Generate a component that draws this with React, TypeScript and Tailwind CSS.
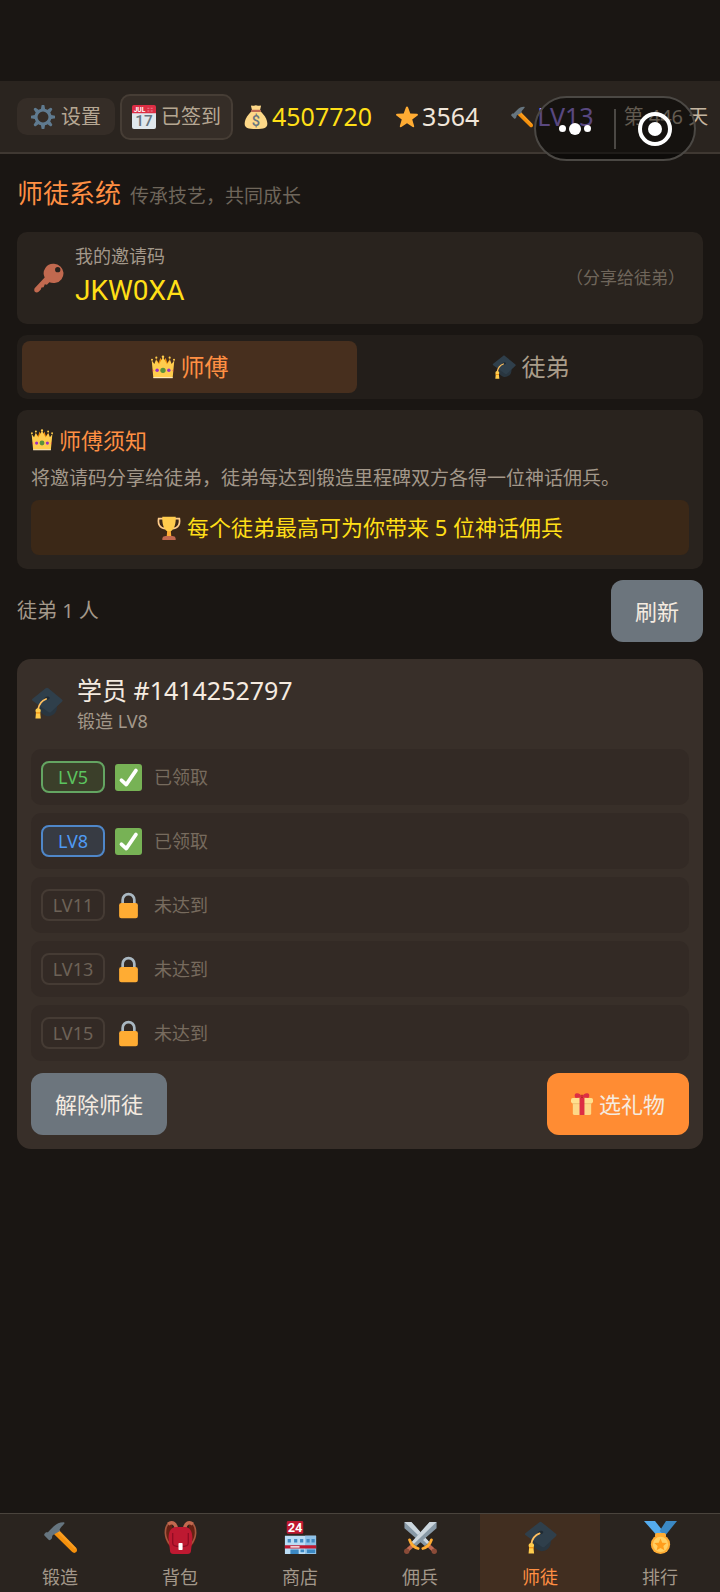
import type { ReactNode } from "react";
import clsx from "clsx";

type IconProps = { className?: string };

function Svg({ className, children }: { className?: string; children: ReactNode }) {
  return (
    <svg viewBox="0 0 36 36" className={clsx("shrink-0", className)} aria-hidden="true">
      {children}
    </svg>
  );
}

function Gear({ className }: IconProps) {
  return (
    <Svg className={className}>
      <g fill="#5f7a8f">
        {[0, 45, 90, 135, 180, 225, 270, 315].map((a) => (
          <path key={a} d="M14.5 8L15.7 1.6a2.3 2.3 0 0 1 4.6 0L21.5 8z" transform={`rotate(${a} 18 18)`} />
        ))}
      </g>
      <circle cx="18" cy="18" r="10.5" fill="none" stroke="#5f7a8f" strokeWidth="4.6" />
    </Svg>
  );
}

function Calendar({ className }: IconProps) {
  return (
    <Svg className={className}>
      <path fill="#e0e7ec" d="M36 33a3 3 0 0 1-3 3H3a3 3 0 0 1-3-3V9h36z" />
      <path fill="#dd2e44" d="M3 0h30a3 3 0 0 1 3 3v9.500H0V3a3 3 0 0 1 3-3z" />
      <path fill="#f4abba" d="M23 4h3v2h-3zM28 4h3v2h-3zM23 8h3v2h-3zM28 8h3v2h-3z" opacity=".5" />
      <text x="2.500" y="10.5" fontSize="10" fontWeight="700" fontFamily="Roboto, sans-serif" fill="#fff">JUL</text>
      <text x="18" y="32" fontSize="23" fontWeight="500" textAnchor="middle" fontFamily="Roboto, sans-serif" fill="#66757f">17</text>
    </Svg>
  );
}

function MoneyBag({ className }: IconProps) {
  return (
    <Svg className={className}>
      <path fill="#fdd888" d="M12 9C7 13 1 21 1 28c0 6 5 8 17 8s17-2 17-8c0-7-6-15-11-19z" />
      <path fill="#fdd888" d="M10.5 1.5c1.500-2 3 .5 4.500-.5s4-1 6 0 3-1.500 4.500.5L24 8H12z" />
      <rect x="10.500" y="7" width="15" height="3.500" rx="1.700" fill="#bf6952" />
      <text x="18" y="31" fontSize="22" fontWeight="500" textAnchor="middle" fontFamily="Roboto, sans-serif" fill="#67757f">$</text>
    </Svg>
  );
}

function Star({ className }: IconProps) {
  return (
    <Svg className={className}>
      <path
        fill="#ffac33"
        d="M18 .8c.8 0 1.400.5 1.700 1.300l3.700 10.200 10.900.3c1.600.1 2.200 1.900 1 2.900l-8.700 6.700 3.100 10.500c.4 1.500-1.100 2.600-2.400 1.800L18 28.300l-9.300 6.200c-1.300.8-2.800-.3-2.400-1.800l3.100-10.500L.7 15.500c-1.200-1-.6-2.800 1-2.900l10.900-.3 3.700-10.200C16.600 1.300 17.200.8 18 .8z"
      />
    </Svg>
  );
}

function Hammer({ className }: IconProps) {
  return (
    <Svg className={className}>
      <path fill="#f4900c" d="M10.800 14.200l4.800-4.800L35.200 29.500c1.100 1.300 1.100 3.200 0 4.400-1.200 1.200-3.200 1.200-4.400 0z" />
      <path fill="#ffac33" d="M13.500 11.500l2.100-2.100L35.200 29.500l-1.500 1.500z" opacity=".5" />
      <path
        fill="#66757f"
        d="M17.600 10.900c-.8-.8-.8-1.700-.1-2.500 1.200-1.700 3.400-4 4.700-5.600.8-1-.2-1.500-1.200-1.500-4.300 0-7.800 2-10.600 4.800L5.800 10.700c-.7.7-1.100 1.700-2.200 1.700-.9 0-1.500-.1-2.200.6L.6 14c-.6.7-.5 1.500.1 2.100l4.300 4.400c.6.6 1.500.6 2.100 0l1.200-1.200c.7-.7.5-1.600.6-2.400.1-1 1-1.600 1.700-2.200z"
      />
    </Svg>
  );
}

function Key({ className }: IconProps) {
  return (
    <Svg className={className}>
      <path
        fill="#c1694f"
        fillRule="evenodd"
        d="M24 1a11.500 11.500 0 0 1 2 22.800c-3 .5-5.600.1-7.500-.8l-3 3-2.500-.5-1.500 3.500-2.500.500-1 2.500-2.500 2.500c-1 1-3.500 1-4.500 0s-.9-3.500 0-4.500L12.800 17.500A11.500 11.500 0 0 1 24 1zm4.500 3.800a3.200 3.200 0 1 0 0 6.400 3.200 3.200 0 0 0 0-6.400z"
      />
    </Svg>
  );
}

function Crown({ className }: IconProps) {
  return (
    <Svg className={className}>
      <path fill="#f4900c" d="M7 5l3 12h16l3-12-4.500 7L22 4l-4 8-4-8-2.500 8z" />
      <path fill="#ffcc4d" d="M1 8l4 5.500L7.500 7l4.500 7L18 3l6 11 4.500-7 2.500 6.500L35 8l-2.500 26h-29z" />
      <path fill="#ffe8b6" d="M3.500 33h29v1.800h-29z" />
      <g fill="#ffcc4d">
        <circle cx="1.500" cy="7" r="1.500" />
        <circle cx="34.500" cy="7" r="1.500" />
        <circle cx="8" cy="4" r="1.600" />
        <circle cx="28" cy="4" r="1.600" />
        <circle cx="18" cy="2.500" r="1.900" />
      </g>
      <circle cx="18" cy="23" r="4" fill="#5c913b" />
      <circle cx="9.200" cy="23" r="2.600" fill="#9b30c0" />
      <circle cx="26.800" cy="23" r="2.600" fill="#9b30c0" />
      <path fill="#dd2e44" d="M2.200 21.500a2 2 0 0 1 .3 3.600zM33.800 21.500a2 2 0 0 0-.3 3.600z" />
    </Svg>
  );
}

function GradCap({ className }: IconProps) {
  return (
    <Svg className={className}>
      <path fill="#293640" d="M10 17l20-1-1 9c-1 6-8 9-12 7.500-3-1-6-3.500-7-5.500z" />
      <path fill="#2f3f4b" d="M16.500 1.500c1-.9 2-.9 3 0L34.800 14c1 .9 1 1.700 0 2.600L22.500 28c-1 .9-2 .9-3 0L1.800 15.500c-1-.8-.9-1.600 0-2.400z" />
      <path fill="#1f2a33" d="M16 11.500c1.500-1.200 4.500-1 5 .5s-2.500 3-4.500 2.500-1.700-2-.5-3z" />
      <path d="M17 13.500c-4 1.500-8 5.500-9 11.500" fill="none" stroke="#ffc060" strokeWidth="2" strokeLinecap="round" />
      <path fill="#ffcc4d" d="M5 27a3 3 0 0 1 6 0l-.7 1.800.7 6.700H5l.6-6.700z" />
      <path fill="#f4900c" d="M5.500 28.500h5v1.300h-5z" />
    </Svg>
  );
}

function Trophy({ className }: IconProps) {
  return (
    <Svg className={className}>
      <path d="M9 4H2.500C1 12 4 18 12 19M27 4h6.500C35 12 32 18 24 19" fill="none" stroke="#ffcc8a" strokeWidth="2.600" />
      <path fill="#ffac33" d="M15.500 20h5l1 11h-7z" />
      <path fill="#ffcc4d" d="M8 1h20c.8 9-2 19.500-7.500 22h-5C10 20.500 7.200 10 8 1z" />
      <path fill="#c1694f" d="M8 36v-2c0-3 3-4 5-4h10c2 0 5 1 5 4v2z" />
    </Svg>
  );
}

function Check({ className }: IconProps) {
  return (
    <Svg className={className}>
      <rect width="36" height="36" rx="4" fill="#77b255" />
      <path d="M8.500 21.500l6.500 6L28 8.500" fill="none" stroke="#fff" strokeWidth="4.800" strokeLinecap="round" strokeLinejoin="round" />
    </Svg>
  );
}

function Lock({ className }: IconProps) {
  return (
    <Svg className={className}>
      <path d="M10.200 18v-7.500a7.800 7.800 0 0 1 15.600 0V18" fill="none" stroke="#aab8c2" strokeWidth="3.600" />
      <rect x="5.500" y="14.500" width="25" height="20.500" rx="3" fill="#ffac33" />
    </Svg>
  );
}

function Gift({ className }: IconProps) {
  return (
    <Svg className={className}>
      <path fill="#fdd888" d="M3 13h30v20a3 3 0 0 1-3 3H6a3 3 0 0 1-3-3z" />
      <rect y="8" width="36" height="9" rx="3" fill="#ffe08f" />
      <path fill="#e8b96a" d="M3 17h30v1.200H3z" />
      <path fill="#dd2e44" d="M14 7h8v29h-8z" />
      <path fill="#a0041e" d="M17 3h2v5h-2z" />
      <path fill="#dd2e44" d="M17.500 7C17 2 12 0 9 .6 6 1.200 5 5 7.500 8zM18.500 7C19 2 24 0 27 .6c3 .6 4 4.400 1.500 7.400z" />
    </Svg>
  );
}

function Backpack({ className }: IconProps) {
  return (
    <Svg className={className}>
      <path d="M9 2C2 3 0 11 1.500 19c.8 4 3.500 8 7 11M27 2c7 1 9 9 7.500 17-.8 4-3.500 8-7 11" fill="#662113" />
      <path d="M12 3C6-1 1.500 4 1.500 13c.2 5 2 9 5.500 13M24 3c6-4 10.500 1 10.500 10-.2 5-2 9-5.500 13" fill="none" stroke="#a5573f" strokeWidth="1.800" />
      <path d="M13.500 8c-1-6-5-7.500-9-4.500M22.500 8c1-6 5-7.500 9-4.500" fill="none" stroke="#c1694f" strokeWidth="3.800" />
      <path fill="#be1931" d="M6.500 32c0 2.500 1 4 4 4h15c3 0 4-1.500 4-4L31 19c0-8-3-12.500-8-12.500H13c-5 0-8 4.500-8 12.500z" />
      <path d="M9.500 13v11c0 3 2 4 8.500 4s8.500-1 8.500-4V13" fill="none" stroke="#8f0c24" strokeWidth="1.400" />
      <rect x="15.800" y="24" width="4.500" height="7.500" rx=".8" fill="#fff" />
    </Svg>
  );
}

function Shop({ className }: IconProps) {
  return (
    <Svg className={className}>
      <path fill="#bbddf5" d="M1 16h34v20H1z" />
      <path fill="#8fc2e8" d="M23 16h12v20H23z" />
      <path fill="#4289c1" d="M4 19.500h3.500v4H4zM11 19.500h3.500v4H11zM17.500 19.500H21v4h-3.500zM24.500 19.500H28v4h-3.500zM30 19.500h3.500v4H30z" />
      <path fill="#be1931" d="M1 26.500h34V30H1z" />
      <path fill="#fff" d="M7 27.500h10v1.500H7z" />
      <path fill="#3b88c3" d="M7 31h9v5H7zM18 31h4v3h-4zM25 31h9v4h-9z" />
      <rect x="3" width="18" height="14" rx="1.500" fill="#be1931" />
      <text x="12" y="11.800" fontSize="14" fontWeight="700" textAnchor="middle" fontFamily="Roboto, sans-serif" fill="#fff">24</text>
    </Svg>
  );
}

function Swords({ className }: IconProps) {
  const sword = (
    <>
      <path fill="#8899a6" d="M.5 1h7.500l19.500 22-4.500 4.500L.5 8z" />
      <path fill="#ccd6dd" d="M.5 1h7.500l19.500 22-2.200 2.200z" />
      <path fill="#bf6952" d="M25 28l3-3 5.500 5-3 3z" />
      <path d="M30 20.500c-1.500 4.500-5.500 8.500-9.500 9.500" fill="none" stroke="#ffac33" strokeWidth="3" strokeLinecap="round" />
      <circle cx="33" cy="33" r="2.900" fill="#8a4b38" />
    </>
  );
  return (
    <Svg className={className}>
      {sword}
      <g transform="translate(36 0) scale(-1 1)">{sword}</g>
    </Svg>
  );
}

function Medal({ className }: IconProps) {
  return (
    <Svg className={className}>
      <path fill="#55acee" d="M0 0h12l11 14-8 3z" />
      <path fill="#3b88c3" d="M24 0h12L23 16l-6-5z" />
      <rect x="12" y="13" width="12" height="5" rx="2" fill="#ffac33" />
      <circle cx="18" cy="25.500" r="10.500" fill="#ffac33" />
      <circle cx="18" cy="25.500" r="8.300" fill="#ffcf62" />
      <path fill="#ff9d1c" d="M18 19l1.900 4.600 4.900.4-3.700 3.200 1.100 4.800-4.200-2.600-4.200 2.600 1.100-4.800-3.700-3.200 4.900-.4z" />
    </Svg>
  );
}

const LEVELS = [
  { level: "LV5", done: true, badge: "border-[#64a562] bg-[#3b3f2a] text-[#5cc35f]" },
  { level: "LV8", done: true, badge: "border-[#4f87c9] bg-[#373b43] text-[#4f9af2]" },
  { level: "LV11", done: false, badge: "border-[#453b34] text-[#6d6257]" },
  { level: "LV13", done: false, badge: "border-[#453b34] text-[#6d6257]" },
  { level: "LV15", done: false, badge: "border-[#453b34] text-[#6d6257]" },
];

const NAV = [
  { label: "锻造", Icon: Hammer },
  { label: "背包", Icon: Backpack },
  { label: "商店", Icon: Shop },
  { label: "佣兵", Icon: Swords },
  { label: "师徒", Icon: GradCap, active: true },
  { label: "排行", Icon: Medal },
];

function TopBar() {
  return (
    <header className="relative flex h-[73px] items-center whitespace-nowrap border-b-2 border-[#3f3832] bg-[#2a241f] pl-[17px] text-[25px]">
      <button className="flex h-[37px] items-center gap-[6px] rounded-[10px] bg-[#352d27] px-[14px] text-[20px] text-[#b5a793]">
        <Gear className="size-6" />
        设置
      </button>
      <button className="ml-[5px] flex h-[46px] items-center gap-[5px] rounded-[10px] border-2 border-[#463d35] bg-[#352d27] px-[10px] text-[20px] text-[#b5a793]">
        <Calendar className="size-6" />
        已签到
      </button>
      <span className="ml-[11px] flex items-center gap-1 text-[#ffdf17]">
        <MoneyBag className="size-6" />
        4507720
      </span>
      <span className="ml-6 flex items-center gap-1 text-[#f0e6da]">
        <Star className="size-[22px]" />
        3564
      </span>
      <span className="ml-8 flex items-center gap-1 text-[#b391ff]">
        <Hammer className="size-[22px]" />
        LV13
      </span>
      <span className="ml-[30px] text-[20px] text-[#c4b5a0]">第 446 天</span>

      <div className="absolute right-[24px] top-[15px] flex h-[65px] w-[162px] items-center rounded-full border-2 border-[#4b4844] bg-black/50">
        <button aria-label="更多" className="flex h-full flex-1 items-center justify-center gap-[3px]">
          <span className="size-[7px] rounded-full bg-white" />
          <span className="size-3 rounded-full bg-white" />
          <span className="size-[7px] rounded-full bg-white" />
        </button>
        <span className="h-10 w-[2px] bg-[#4b4844]" />
        <button aria-label="关闭" className="flex h-full flex-1 items-center justify-center">
          <span className="flex size-[34px] items-center justify-center rounded-full border-4 border-white">
            <span className="size-[14px] rounded-full bg-white" />
          </span>
        </button>
      </div>
    </header>
  );
}

function InviteCard() {
  return (
    <section className="mt-[19px] flex h-[92px] items-center rounded-[10px] bg-[#29231e] pl-[17px] pr-[18px]">
      <Key className="size-[30px]" />
      <div className="ml-[11px]">
        <p className="text-[18px] leading-[26px] text-[#a3988a]">我的邀请码</p>
        <p className="font-[Roboto] text-[28px] leading-[44px] text-[#ffdf17]">JKW0XA</p>
      </div>
      <span className="ml-auto text-[17px] text-[#6f665b]">（分享给徒弟）</span>
    </section>
  );
}

function RoleTabs() {
  return (
    <div role="tablist" className="mt-[11px] grid grid-cols-2 gap-[6px] rounded-[10px] bg-[#231e1a] px-[5px] py-[6px] text-[24px] leading-[52px]">
      <button role="tab" aria-selected="true" className="flex items-center justify-center gap-[6px] rounded-lg bg-[#472f1e] text-[#ff8f43]">
        <Crown className="size-6" />
        师傅
      </button>
      <button role="tab" aria-selected="false" className="flex items-center justify-center gap-[6px] rounded-lg text-[#aa9d8a]">
        <GradCap className="size-6" />
        徒弟
      </button>
    </div>
  );
}

function Notice() {
  return (
    <section className="mt-[11px] rounded-[10px] bg-[#29231e] px-[14px] pb-[14px] pt-[14px]">
      <h2 className="flex items-center gap-[6px] text-[22px] leading-8 text-[#ff8f43]">
        <Crown className="size-[22px]" />
        师傅须知
      </h2>
      <p className="mt-[9px] text-[19px] leading-[26px] text-[#a3988a]">
        将邀请码分享给徒弟，徒弟每达到锻造里程碑双方各得一位神话佣兵。
      </p>
      <div className="mt-[9px] flex h-[55px] items-center justify-center gap-[6px] rounded-lg bg-[#3b2817] text-[22px] text-[#ffdf17]">
        <Trophy className="size-[24px]" />
        每个徒弟最高可为你带来 5 位神话佣兵
      </div>
    </section>
  );
}

function StudentCard() {
  return (
    <section className="mt-[17px] rounded-[14px] bg-[#382f29] px-[14px] pb-[14px] pt-[13px]">
      <div className="flex items-center">
        <GradCap className="size-8" />
        <div className="ml-[14px]">
          <h3 className="text-[25px] leading-9 text-[#f5ebe0]">学员 #1414252797</h3>
          <p className="text-[18px] leading-[26px] text-[#a3988a]">锻造 LV8</p>
        </div>
      </div>

      <ul className="mt-[15px] flex flex-col gap-2">
        {LEVELS.map((l) => (
          <li key={l.level} className="flex h-14 items-center rounded-[10px] bg-[#332a25] px-[10px] text-[18px]">
            <span className={clsx("w-16 rounded-lg border-2 text-center leading-[28px]", l.badge)}>{l.level}</span>
            {l.done ? <Check className="ml-[10px] size-[27px]" /> : <Lock className="ml-[10px] size-[27px]" />}
            <span className="ml-[12px] text-[#776b5e]">{l.done ? "已领取" : "未达到"}</span>
          </li>
        ))}
      </ul>

      <div className="mt-3 flex justify-between text-[22px] leading-[62px] text-[#f5ebe0]">
        <button className="rounded-xl bg-[#6c757d] px-[24px]">解除师徒</button>
        <button className="flex items-center gap-[6px] rounded-xl bg-[#ff8c33] px-[24px]">
          <Gift className="size-[22px]" />
          选礼物
        </button>
      </div>
    </section>
  );
}

export default function App() {
  return (
    <div className="flex min-h-screen flex-col bg-[#1a1613] pt-[81px] font-['Noto_Sans','Noto_Sans_CJK_SC',sans-serif]">
      <TopBar />

      <main className="flex-1 px-[17px] pt-[22px]">
        <div className="flex items-baseline gap-[9px] leading-[34px]">
          <h1 className="text-[26px] text-[#ff8f43]">师徒系统</h1>
          <span className="text-[19px] text-[#6f665b]">传承技艺，共同成长</span>
        </div>
        <InviteCard />
        <RoleTabs />
        <Notice />
        <div className="mt-[11px] flex items-center justify-between">
          <span className="text-[20px] text-[#a3988a]">徒弟 1 人</span>
          <button className="rounded-xl bg-[#6c757d] px-[24px] text-[22px] leading-[62px] text-[#f5ebe0]">刷新</button>
        </div>
        <StudentCard />
      </main>

      <nav className="grid grid-cols-6 border-t border-[#4a443d] bg-[#2a241f] text-[18px]">
        {NAV.map(({ label, Icon, active }) => (
          <a
            key={label}
            href="#"
            className={clsx(
              "flex h-[78px] flex-col items-center pt-[7px]",
              active ? "bg-[#412e20] text-[#ff8f43]" : "text-[#a3988a]",
            )}
          >
            <Icon className="size-[33px]" />
            <span className="mt-[9px] leading-7">{label}</span>
          </a>
        ))}
      </nav>
    </div>
  );
}
